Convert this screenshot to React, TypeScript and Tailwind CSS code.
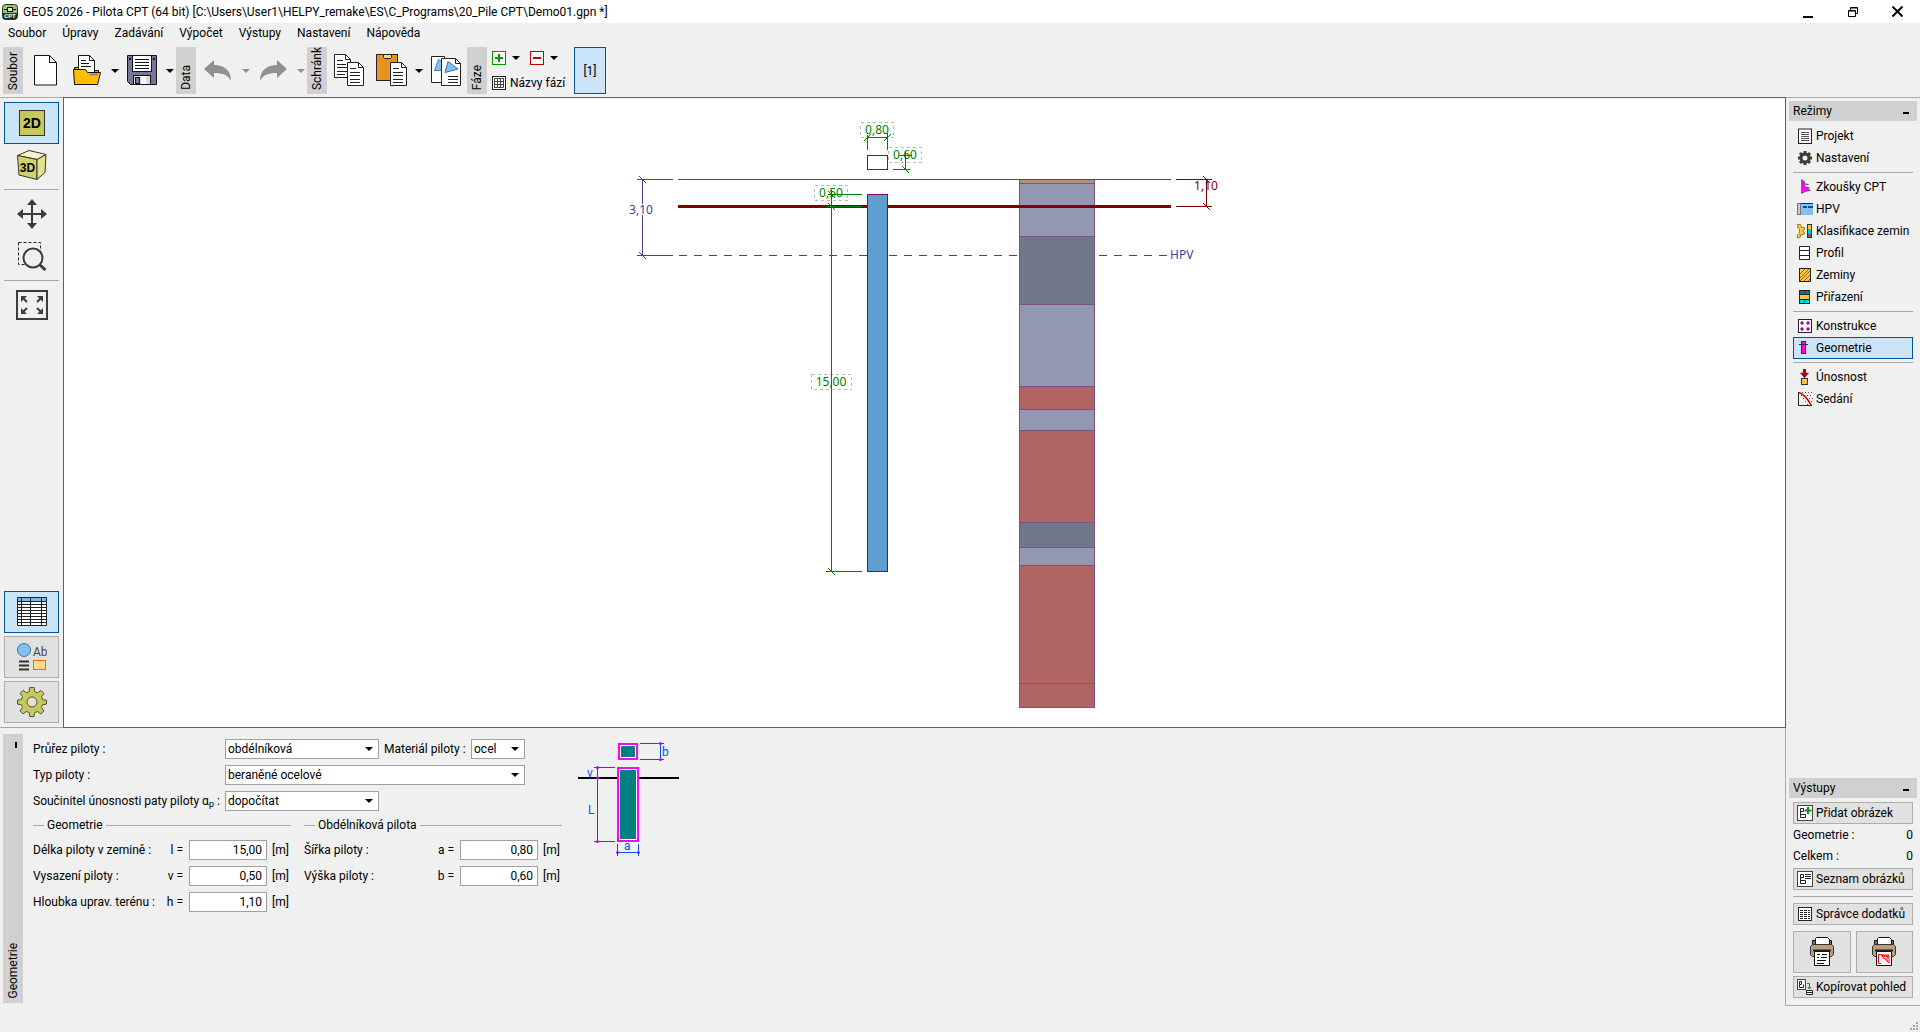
import React from 'react';

const Svg: React.FC<{ w: number; h: number; children: React.ReactNode; label?: string }> = ({ w, h, children, label }) => (
  <svg width={w} height={h} viewBox={`0 0 ${w} ${h}`} className="shrink-0" aria-hidden={label ? undefined : true} aria-label={label}>
    {children}
  </svg>
);

const Caret: React.FC<{ color?: string }> = ({ color = '#000' }) => (
  <Svg w={8} h={4}>
    <path d="M0 0h8L4 4z" fill={color} />
  </Svg>
);

const DropButton: React.FC<{ label: string; muted?: boolean }> = ({ label, muted }) => (
  <button aria-label={label} className="flex h-full w-[13px] items-center justify-center">
    <Caret color={muted ? '#909090' : '#000'} />
  </button>
);

const GroupStrip: React.FC<{ label: string }> = ({ label }) => (
  <div className="mr-px flex h-full w-5 shrink-0 items-end bg-[#d0d0d0] pb-1">
    <span className="rotate-180 leading-5 whitespace-nowrap [writing-mode:vertical-rl]">{label}</span>
  </div>
);

/* Toolbar icons */

const NewIcon = () => (
  <Svg w={23} h={31}>
    <path d="M.5.5h15l7 7v22.500H.5z" fill="#fff" stroke="#111" />
    <path d="M15.500.5v7h7" fill="none" stroke="#111" />
  </Svg>
);

const OpenIcon = () => (
  <Svg w={29} h={31}>
    <path d="M1.500 29.500v-17h4l2 3h18v3" fill="#e8a800" stroke="#111" />
    <path d="M5.500 20V.5h11l5 5V20z" fill="#fff" stroke="#111" />
    <path d="M16.500.5v5h5M8 5.500h5M8 8.500h8M8 11.500h10" fill="none" stroke="#111" />
    <path d="M1.500 29.500l-1-15h12l2 3h13l-3 12z" fill="#ffbf00" stroke="#111" />
    <path d="M17 19.500h8" stroke="#888" strokeWidth="2" />
  </Svg>
);

const SaveIcon = () => (
  <Svg w={30} h={31}>
    <path d="M.5.5h29v29h-26l-3-3z" fill="#76769a" stroke="#111" />
    <rect x="5.500" y=".5" width="19" height="16" fill="#fff" stroke="#111" />
    <path d="M8 4.500h14M8 7.500h14M8 10.500h14M8 13.500h14" stroke="#111" />
    <rect x="2" y="3" width="2" height="2" fill="#111" />
    <rect x="26" y="3" width="2" height="2" fill="#111" />
    <rect x="6.500" y="20.500" width="17" height="9" fill="#ddd" stroke="#111" />
    <rect x="8.500" y="22.500" width="4" height="6" fill="#76769a" stroke="#111" />
    <path d="M15.500 21v8M18 21v8" stroke="#fff" strokeWidth="2" />
  </Svg>
);

const UndoIcon = () => (
  <Svg w={28} h={22}>
    <path d="M0 9L10 0v5c10 0 17 5 17 16-3-6-8-8-17-8v5z" fill="#909090" />
  </Svg>
);

const RedoIcon = () => (
  <Svg w={28} h={22}>
    <path d="M28 9L18 0v5C8 5 1 10 1 21c3-6 8-8 17-8v5z" fill="#909090" />
  </Svg>
);

const CopyIcon = () => (
  <Svg w={31} h={33}>
    <path d="M.5.5h11l5 5v18H.5z" fill="#fff" stroke="#222" />
    <path d="M11.500.5v5h5M3 6.500h6M3 10.500h9M3 13.500h10M3 17.500h10M3 20.500h8" fill="none" stroke="#222" />
    <path d="M13.500 8.500h11l5 5v18h-16z" fill="#fff" stroke="#222" />
    <path d="M24.500 8.500v5h5M16 14.500h6M16 18.500h10M16 21.500h10M16 25.500h10M16 28.500h10" fill="none" stroke="#222" />
  </Svg>
);

const PasteIcon = () => (
  <Svg w={31} h={33}>
    <rect x=".5" y=".5" width="21" height="26" fill="#e59420" stroke="#222" />
    <path d="M7.500.5h8v3l-1 1h-6l-1-1z" fill="#ffd98a" stroke="#222" />
    <path d="M14.500 8.500h11l5 5v18h-16z" fill="#fff" stroke="#222" />
    <path d="M25.500 8.500v5h5M17 14.500h6M17 18.500h10M17 21.500h10M17 25.500h10M17 28.500h10" fill="none" stroke="#222" />
  </Svg>
);

const PicturesIcon = () => (
  <Svg w={31} h={32}>
    <path d="M.5 1.500h13v26H.5z" fill="#fff" stroke="#222" />
    <path d="M3.500 15.500l4-11 3 2v9z" fill="#84c0ee" stroke="#3b82c4" />
    <path d="M10.500 3.500h14l5 5v22h-19z" fill="#fff" stroke="#222" />
    <path d="M24.500 3.500v5h5" fill="none" stroke="#222" />
    <path d="M14 17.500l3-11 10 7.500z" fill="#84c0ee" stroke="#2f74b5" />
    <path d="M17 21.500h10M17 24.500h10M17 27.500h10" stroke="#222" />
  </Svg>
);

const PlusIcon = () => (
  <Svg w={14} h={14}>
    <rect x=".5" y=".5" width="13" height="13" fill="#fff" stroke="#009a00" />
    <path d="M7 3v8M3 7h8" stroke="#009a00" strokeWidth="2" />
  </Svg>
);

const MinusIcon = () => (
  <Svg w={14} h={14}>
    <rect x=".5" y=".5" width="13" height="13" fill="#fff" stroke="#c00000" />
    <path d="M3 7h8" stroke="#c00000" strokeWidth="2" />
  </Svg>
);

const StageNamesIcon = () => (
  <Svg w={14} h={14}>
    <rect x=".5" y=".5" width="13" height="13" fill="#fff" stroke="#222" />
    <path d="M2.500 2.500h9v9h-9zM2.500 5.500h9M2.500 8.500h9M5.500 2.500v9M8.500 2.500v9" fill="none" stroke="#444" />
  </Svg>
);

const AppIcon = () => (
  <Svg w={16} h={16}>
    <rect x=".5" y=".5" width="15" height="15" rx="3" fill="#9cbf7c" stroke="#26361c" />
    <path d="M2 5.500h3M11 5.500h3" stroke="#111" />
    <rect x="5.500" y="3.500" width="5" height="4" fill="#d8ecc6" stroke="#111" />
    <path d="M1 9h14v4.500a2 2 0 0 1-2 2H3a2 2 0 0 1-2-2z" fill="#22331a" />
    <text x="8" y="14" textAnchor="middle" fontSize="6" fontWeight="700" fill="#fff">CPT</text>
  </Svg>
);

/* View buttons on the left */

const View2DIcon = () => (
  <Svg w={26} h={26}>
    <rect x=".5" y=".5" width="25" height="25" fill="#c8c85c" stroke="#333" />
    <text x="13" y="18" textAnchor="middle" fontSize="14" fontWeight="700" fontFamily="Liberation Sans, sans-serif">2D</text>
  </Svg>
);

const View3DIcon = () => (
  <Svg w={30} h={30}>
    <path d="M.5 5.500L12 .5l17 4-9 5z" fill="#f6f6c8" stroke="#333" />
    <path d="M.5 5.500l19.500 4v20L2 25z" fill="#d2d268" stroke="#333" />
    <path d="M20 9.500l9-5-1 18-8 7z" fill="#e2e28c" stroke="#333" />
    <text x="10.500" y="22" textAnchor="middle" fontSize="12" fontWeight="700" fontFamily="Liberation Sans, sans-serif">3D</text>
  </Svg>
);

const MoveIcon = () => (
  <Svg w={30} h={30}>
    <path d="M15 4v22M4 15h22" stroke="#3c3c3c" strokeWidth="2" />
    <path d="M15 0l5 6H10zM15 30l5-6H10zM0 15l6-5v10zM30 15l-6-5v10z" fill="#3c3c3c" />
  </Svg>
);

const ZoomIcon = () => (
  <Svg w={30} h={30}>
    <rect x="1.500" y="1.500" width="22" height="22" fill="none" stroke="#222" strokeDasharray="3 2" />
    <circle cx="16" cy="17" r="9.500" fill="#efefef" stroke="#3c3c3c" strokeWidth="2" />
    <path d="M22.500 23.500l6 5.500" stroke="#3c3c3c" strokeWidth="3" />
  </Svg>
);

const FitIcon = () => (
  <Svg w={32} h={30}>
    <rect x="1" y="1" width="30" height="28" fill="none" stroke="#3c3c3c" strokeWidth="2" />
    <path d="M6 7l5 5M26 7l-5 5M6 23l5-5M26 23l-5-5" stroke="#3c3c3c" strokeWidth="2" />
    <path d="M5 6h6l-6 6zM27 6h-6l6 6zM5 24h6l-6-6zM27 24h-6l6-6z" fill="#3c3c3c" />
  </Svg>
);

const TableIcon = () => (
  <Svg w={30} h={30}>
    <rect x="1" y="1" width="28" height="28" fill="#fff" />
    <rect x="1" y="1" width="28" height="4" fill="#7db8e8" />
    <path d="M.5.5h29v28H.5zM0 4.500h30M0 7.500h30M0 10.500h30M0 13.500h30M0 16.500h30M0 19.500h30M0 22.500h30M0 25.500h30M4.500 0v29M13.500 0v29M24.500 0v29" fill="none" stroke="#222" />
  </Svg>
);

const StyleIcon = () => (
  <Svg w={30} h={28}>
    <circle cx="7" cy="7" r="6.500" fill="#84c0ee" stroke="#2f74b5" />
    <text x="16" y="13" fontSize="12" fill="#444">Ab</text>
    <path d="M2 18.500h10M2 22.500h10M2 26.500h10" stroke="#333" strokeWidth="2" />
    <rect x="16.500" y="17.500" width="12" height="9" fill="#ffdb92" stroke="#e07000" />
  </Svg>
);

const GearIcon = () => (
  <Svg w={30} h={30}>
    <path
      d="M12.800.5h4.400l.6 4.200 2.900 1.200 3.300-2.500 3 3-2.500 3.400 1.200 2.900 3.800.5v3.800l-3.900.7-1.200 2.800 2.500 3.500-3 3-3.400-2.500-2.900 1.200-.6 3.800h-4.200l-.6-3.900-2.800-1.200L6 26.900l-3-3 2.400-3.300-1.100-2.900-3.800-.6v-4l3.900-.6 1.100-2.900L3.100 6.300l3-3 3.200 2.500 2.900-1.200z"
      fill="#c8c85c"
      stroke="#555530"
    />
    <circle cx="15" cy="15" r="5" fill="#e1e1e1" stroke="#555530" />
  </Svg>
);

/* Mode icons, all in a 16 px box */

const modeIcons: Record<string, React.ReactNode> = {
  Projekt: (
    <>
      <rect x="1.500" y="1" width="13" height="14.500" fill="#fff" stroke="#222" />
      <path d="M4 4.500h8M4 6.500h8M4 8.500h8M4 10.500h8M4 12.500h8" stroke="#555" />
    </>
  ),
  Nastavení: (
    <>
      <circle cx="8" cy="8" r="4" fill="none" stroke="#3c3c3c" strokeWidth="3" />
      <path d="M8 1v3M8 12v3M1 8h3M12 8h3M3 3l2 2M11 11l2 2M13 3l-2 2M3 13l2-2" stroke="#3c3c3c" strokeWidth="3" />
    </>
  ),
  'Zkoušky CPT': <path d="M4.500.5l3 2v2l4 1h-4v2l5 1.500h-3l4 2.500-5 1-4 2z" fill="#f0f" stroke="#555" strokeWidth=".7" />,
  HPV: (
    <>
      <rect x="4" y="3" width="12" height="11" fill="#84c0ee" />
      <path d="M4 2.500h12" stroke="#800000" />
      <path d="M6 6h4M11 6h5" stroke="#0050b0" strokeWidth="2" />
      <rect x=".5" y="2.500" width="3" height="11" fill="#ccc" stroke="#777" />
    </>
  ),
  'Klasifikace zemin': (
    <>
      <path d="M.5 1.500h3l1 3h3v2l-2 1.500 2 1.500v1.500l-4 1v2l-3 1V12l2-2V6l-2-1.500z" fill="#ffc83c" stroke="#8a6400" strokeWidth=".8" />
      <rect x="10.500" y="1.500" width="4" height="13" fill="#00c8c8" stroke="#333" />
      <rect x="11" y="2" width="3" height="4" fill="#ffc83c" />
      <rect x="11" y="11" width="3" height="3" fill="#666" />
    </>
  ),
  Profil: <path d="M2.500 1.500h10v13h-10zM2.500 5.500h10M2.500 10.500h10" fill="#fff" stroke="#222" />,
  Zeminy: (
    <>
      <rect x="2.500" y="1.500" width="11" height="13" fill="#ffc83c" stroke="#222" />
      <path d="M3 7l5-5M3 11l9-9M3 14L13 4M7 14l6-6M11 14l2-2" stroke="#9a5c00" />
    </>
  ),
  Přiřazení: (
    <>
      <rect x="2.500" y="1.500" width="10" height="13" fill="#ffc83c" stroke="#222" />
      <rect x="3" y="2" width="9" height="3" fill="#008080" />
      <rect x="3" y="11" width="9" height="3" fill="#00e0e0" />
      <path d="M2 5.500h11M2 10.500h11M6 14l3-3M6 5l3-3" stroke="#222" />
    </>
  ),
  Konstrukce: (
    <>
      <rect x="1.500" y="1.500" width="13" height="13" fill="#fff" stroke="#222" />
      <g fill="#a000a0">
        <circle cx="5" cy="5" r="1.700" />
        <circle cx="11" cy="5" r="1.700" />
        <circle cx="5" cy="11" r="1.700" />
        <circle cx="11" cy="11" r="1.700" />
      </g>
    </>
  ),
  Geometrie: (
    <>
      <rect x="4.500" y="1.500" width="4" height="12" fill="#f0f" stroke="#333" />
      <path d="M2 4.500h9" stroke="#333" />
    </>
  ),
  Únosnost: (
    <>
      <path d="M7.500 0v5" stroke="#c00000" strokeWidth="3" />
      <path d="M3.500 4h8l-4 5z" fill="#c00000" stroke="#333" strokeWidth=".5" />
      <rect x="4.500" y="9.500" width="6" height="6" fill="#ffc83c" stroke="#333" />
    </>
  ),
  Sedání: (
    <>
      <path d="M2 1.500h14M4 4.500h12M6 7.500h10M8 10.500h8M10 13.500h6" stroke="#555" strokeDasharray="1 2" />
      <path d="M1.500 1v13.500H15" fill="none" stroke="#222" />
      <path d="M2 1.500c6 2 9 7 12 12.500" fill="none" stroke="#d00000" strokeWidth="1.500" />
    </>
  ),
};

const PanelHeader: React.FC<{ title: string }> = ({ title }) => (
  <div className="mx-[3px] flex h-5 items-center justify-between bg-[#d0d0d0] px-1">
    <h2>{title}</h2>
    <button aria-label={`Sbalit ${title}`} className="flex h-5 w-3.5 items-center justify-center pt-1">
      <span className="h-0.5 w-1.5 bg-black" />
    </button>
  </div>
);

const Divider = () => <hr className="my-[3px] border-t border-[#a8a8a8]" />;

const ModeItem: React.FC<{ name: string; active?: boolean }> = ({ name, active }) => (
  <button
    className={`flex h-[22px] w-full items-center gap-[3px] border pl-[3px] text-left whitespace-nowrap ${
      active ? 'border-[#005499] bg-[#cce4f7]' : 'border-transparent'
    }`}
  >
    <Svg w={16} h={16}>{modeIcons[name]}</Svg>
    {name}
  </button>
);

const modeGroups = [
  ['Projekt', 'Nastavení'],
  ['Zkoušky CPT', 'HPV', 'Klasifikace zemin', 'Profil', 'Zeminy', 'Přiřazení'],
  ['Konstrukce', 'Geometrie'],
  ['Únosnost', 'Sedání'],
];

const PictureGlyph = () => (
  <>
    <rect x=".5" y=".5" width="15" height="15" fill="#fff" stroke="#444" />
    <path d="M3.500 3.500h3v3h-3zM3.500 6.500v6h5v-3h-5" fill="none" stroke="#222" />
  </>
);

const OutputButton: React.FC<{ label: string; children: React.ReactNode }> = ({ label, children }) => (
  <button className="flex h-[22px] w-full items-center gap-[3px] border border-[#adadad] bg-[#e1e1e1] pl-[3px] whitespace-nowrap">
    <Svg w={16} h={16}>{children}</Svg>
    {label}
  </button>
);

const PrinterIcon: React.FC<{ picture?: boolean }> = ({ picture }) => (
  <Svg w={24} h={30}>
    <path d="M2.500 8V3.500h3V8M19 8V3.500h2.500V8" fill="#777" stroke="#111" />
    <path d="M5.500 9V1.500l1-1h11l2 2V9z" fill="#fff" stroke="#111" />
    <path d="M.5 9.500l2-2h19l2 2v8l-2 2h-19l-2-2z" fill="#b8a078" stroke="#333" />
    <path d="M3 13.500h18" stroke="#222" strokeWidth="2" />
    <path d="M4.500 14.500h15v14h-15z" fill="#fff" stroke="#111" />
    {picture ? (
      <path d="M9 17.500H6.500v9H9M9 18h8v8zM9 18l8 2M12 18v4M15 18v6" fill="none" stroke="#f00" />
    ) : (
      <path d="M7 17.500h3M12 17.500h5M7 20.500h2M11 20.500h6M7 23.500h9M7 26.500h7" stroke="#111" />
    )}
  </Svg>
);

/* Soil column: top and bottom of each layer in drawing units */
const layers = [
  { top: 179, bottom: 183, fill: '#b09080' },
  { top: 183, bottom: 236, fill: '#9198b0' },
  { top: 236, bottom: 304, fill: '#707788' },
  { top: 304, bottom: 386, fill: '#9198b0' },
  { top: 386, bottom: 409, fill: '#b06563' },
  { top: 409, bottom: 430, fill: '#9198b0' },
  { top: 430, bottom: 522, fill: '#b06563' },
  { top: 522, bottom: 547, fill: '#707788' },
  { top: 547, bottom: 565, fill: '#9198b0' },
  { top: 565, bottom: 683, fill: '#b06563' },
  { top: 683, bottom: 707, fill: '#b06563' },
];

const Tick: React.FC<{ x: number; y: number; flip?: boolean }> = ({ x, y, flip }) => (
  <path d={flip ? `M${x - 3} ${y + 3}l7-7` : `M${x - 3} ${y - 3}l7 7`} />
);

const Drawing = () => (
  <svg
    viewBox="64 98 1721 629"
    className="block h-full w-full"
    preserveAspectRatio="xMidYMid meet"
    role="img"
    aria-label="Geometrie piloty"
    fontSize="12"
    fontFamily="Noto Sans, sans-serif"
    textAnchor="middle"
  >
    <g fill="none" shapeRendering="crispEdges">
      <path d="M679 255.500H1171" stroke="#4040a0" strokeDasharray="8 7" />
      {layers.map(({ top, bottom, fill }) => (
        <rect key={top} x="1019.500" y={top + 0.5} width="75" height={bottom - top} fill={fill} stroke="#80508a" />
      ))}
      <path d="M678 179.500H1171" stroke="#008000" />
      <path d="M678 206.500H1171" stroke="#800000" strokeWidth="3" />
      <rect x="867.500" y="194.500" width="20" height="377" fill="#5f9fcf" stroke="#800080" />
      <rect x="867.500" y="155.500" width="20" height="14" stroke="#800080" />
      <g stroke="#b8b8b8" strokeDasharray="3 3">
        <rect x="860.500" y="122.500" width="33" height="15" />
        <rect x="888.500" y="147.500" width="33" height="15" />
        <rect x="814.500" y="185.500" width="33" height="15" />
        <rect x="811.500" y="374.500" width="40" height="15" />
      </g>
      <g stroke="#008000">
        <path d="M867.500 135V150M887.500 133V150M867 137.500H888" />
        <path d="M905.500 151V170M893 169.500H910M899 155.500H912" />
        <path d="M831.500 190V572M828 194.500H862M826 206.500H862M826 571.500H862" />
      </g>
      <g stroke="#4040a0">
        <path d="M642.500 179V256M637 179.500H673M637 255.500H673" />
      </g>
      <path d="M1206.500 179V207M1176 179.500H1212M1176 206.500H1212" stroke="#800000" />
    </g>
    <g fill="none">
      <g stroke="#008000">
        <Tick x={867} y={138} flip />
        <Tick x={887} y={138} flip />
        <Tick x={905} y={169} />
        <Tick x={831} y={206} />
        <Tick x={831} y={571} />
        <Tick x={831} y={194} />
      </g>
      <g stroke="#4040a0">
        <Tick x={642} y={179} />
        <Tick x={642} y={255} />
      </g>
      <g stroke="#800000">
        <Tick x={1206} y={179} />
        <Tick x={1206} y={206} />
      </g>
    </g>
    <g fill="#008000">
      <text x="877" y="134">0,80</text>
      <text x="905" y="159">0,60</text>
      <text x="831" y="197">0,50</text>
      <text x="831" y="386">15,00</text>
    </g>
    <text x="641" y="214" fill="#4040a0" stroke="#fff" strokeWidth="2" paintOrder="stroke">3,10</text>
    <text x="1206" y="190" fill="#800000">1,10</text>
    <text x="1170" y="259" fill="#4040a0" textAnchor="start">HPV</text>
  </svg>
);

/* Small key to the dimensions typed in the form */
const PileSketch = () => (
  <svg width="104" height="116" viewBox="577 742 104 116" className="shrink-0" role="img" aria-label="Schéma piloty" fontSize="12" fill="#0050ff">
    <path d="M578 778H679" stroke="#000" strokeWidth="2" />
    <rect x="619" y="744" width="18" height="15" fill="#fff" stroke="#f0f" strokeWidth="2" />
    <rect x="621" y="746" width="14" height="11" fill="#008080" />
    <rect x="618" y="768" width="20" height="73" fill="#fff" stroke="#f0f" strokeWidth="2" />
    <rect x="620" y="770" width="16" height="69" fill="#008080" />
    <path d="M640 743.500H664M640 759.500H664M660.500 743V760M594 767.500H615M594 841.500H615M597.500 767V842M617.500 844V856M638.500 844V856M617 852.500H639" fill="none" stroke="#0050ff" />
    <g fill="#c000ff">
      <circle cx="660.500" cy="743.500" r="1.500" />
      <circle cx="660.500" cy="759.500" r="1.500" />
      <circle cx="597.500" cy="767.500" r="1.500" />
      <circle cx="597.500" cy="778" r="1.500" />
      <circle cx="597.500" cy="841.500" r="1.500" />
      <circle cx="617.500" cy="852.500" r="1.500" />
      <circle cx="638.500" cy="852.500" r="1.500" />
    </g>
    <text x="662" y="756">b</text>
    <text x="587" y="777">v</text>
    <text x="588" y="814">L</text>
    <text x="624" y="850">a</text>
  </svg>
);

const Select: React.FC<{ id: string; value: string; className: string }> = ({ id, value, className }) => (
  <div className={`relative shrink-0 ${className}`}>
    <select id={id} className="h-5 w-full appearance-none border border-[#a0a0a0] bg-white pl-0.5 leading-4 outline-none">
      <option>{value}</option>
    </select>
    <span className="pointer-events-none absolute inset-y-0 right-1.5 flex items-center">
      <Caret />
    </span>
  </div>
);

interface FieldProps {
  id: string;
  label: string;
  symbol: string;
  value: string;
}

const Field: React.FC<FieldProps> = ({ id, label, symbol, value }) => (
  <div className="flex h-5 items-center whitespace-nowrap">
    <label htmlFor={id} className="flex flex-1 justify-between pr-1.5">
      <span>{label}</span>
      <span>{symbol} =</span>
    </label>
    <input id={id} defaultValue={value} className="h-5 w-[78px] border border-[#a0a0a0] bg-white px-1 text-right outline-none" />
    <span className="w-6 pl-[5px]">[m]</span>
  </div>
);

const FieldGroup: React.FC<{ title: string; children: React.ReactNode }> = ({ title, children }) => (
  <fieldset className="flex w-[258px] flex-col gap-1.5">
    <legend className="mb-[5px] flex h-5 w-full items-center gap-[3px]">
      <span className="h-px w-[11px] bg-[#a8a8a8]" />
      {title}
      <span className="h-px flex-1 bg-[#a8a8a8]" />
    </legend>
    {children}
  </fieldset>
);

const ViewButton: React.FC<{ label: string; look?: 'flat' | 'active' | 'raised'; children: React.ReactNode }> = ({ label, look = 'flat', children }) => {
  const looks = {
    flat: 'border-transparent',
    active: 'border-[#005499] bg-[#cce4f7]',
    raised: 'border-[#adadad] bg-[#e1e1e1]',
  };
  return (
    <button aria-label={label} className={`flex h-[42px] w-full items-center justify-center border ${looks[look]}`}>
      {children}
    </button>
  );
};

const menu = ['Soubor', 'Úpravy', 'Zadávání', 'Výpočet', 'Výstupy', 'Nastavení', 'Nápověda'];

const ToolButton: React.FC<{ label: string; children: React.ReactNode }> = ({ label, children }) => (
  <button aria-label={label} className="flex h-full w-[42px] items-center justify-center">
    {children}
  </button>
);

const App: React.FC = () => (
  <div className="flex min-h-screen flex-col bg-[#f0f0f0] font-['Roboto','Noto_Sans',sans-serif] text-[12px] leading-4 text-black">
    <header className="flex h-[23px] items-center bg-white pl-0.5">
      <AppIcon />
      <h1 className="flex-1 pl-[5px]">GEO5 2026 - Pilota CPT (64 bit) [C:\Users\User1\HELPY_remake\ES\C_Programs\20_Pile CPT\Demo01.gpn *]</h1>
      <div className="flex h-full">
        <button aria-label="Minimalizovat" className="flex h-full w-[45px] items-center justify-center pt-1">
          <Svg w={10} h={10}><path d="M0 8h10" stroke="#000" strokeWidth="2" /></Svg>
        </button>
        <button aria-label="Obnovit" className="flex h-full w-[45px] items-center justify-center">
          <Svg w={10} h={10}><path d="M.5 3.500h7v6h-7zM.5 4h7M2.500 3V.5h7v6H8M2.500 1h7" fill="none" stroke="#000" /></Svg>
        </button>
        <button aria-label="Zavřít" className="flex h-full w-[45px] items-center justify-center">
          <Svg w={11} h={11}><path d="M.5.5l10 10M10.500.5l-10 10" stroke="#000" strokeWidth="2" /></Svg>
        </button>
      </div>
    </header>

    <nav className="flex h-6 items-start">
      {menu.map((item) => (
        <button key={item} className="h-5 px-2">{item}</button>
      ))}
    </nav>

    <div className="flex h-[47px] items-center pl-[3px]">
      <GroupStrip label="Soubor" />
      <ToolButton label="Nový"><NewIcon /></ToolButton>
      <ToolButton label="Otevřít"><OpenIcon /></ToolButton>
      <DropButton label="Naposledy otevřené" />
      <ToolButton label="Uložit"><SaveIcon /></ToolButton>
      <DropButton label="Uložit jako" />
      <GroupStrip label="Data" />
      <ToolButton label="Zpět"><UndoIcon /></ToolButton>
      <DropButton label="Historie zpět" muted />
      <ToolButton label="Znovu"><RedoIcon /></ToolButton>
      <DropButton label="Historie znovu" muted />
      <GroupStrip label="Schránk" />
      <ToolButton label="Kopírovat"><CopyIcon /></ToolButton>
      <ToolButton label="Vložit"><PasteIcon /></ToolButton>
      <DropButton label="Možnosti vložení" />
      <ToolButton label="Kopírovat obrázky"><PicturesIcon /></ToolButton>
      <GroupStrip label="Fáze" />
      <div className="flex h-full w-[86px] flex-col justify-between py-[3px] pl-1">
        <div className="flex h-4 items-center">
          <button aria-label="Přidat fázi"><PlusIcon /></button>
          <span className="h-4 w-6 pl-[3px]"><DropButton label="Možnosti přidání" /></span>
          <button aria-label="Odebrat fázi"><MinusIcon /></button>
          <span className="h-4 w-6 pl-[3px]"><DropButton label="Možnosti odebrání" /></span>
        </div>
        <button className="flex h-4 items-center gap-1 whitespace-nowrap">
          <StageNamesIcon />
          Názvy fází
        </button>
      </div>
      <button className="h-full w-8 border border-[#005499] bg-[#cce4f7]">[1]</button>
    </div>

    <main className="mt-[3px] flex flex-1">
      <div className="flex min-w-0 flex-1 flex-col">
        <div className="flex flex-1">
          <aside className="flex w-[63px] shrink-0 flex-col justify-between border-y border-[#a8a8a8] px-1 py-1">
            <div>
              <ViewButton label="Pohled 2D" look="active"><View2DIcon /></ViewButton>
              <ViewButton label="Pohled 3D"><View3DIcon /></ViewButton>
              <Divider />
              <ViewButton label="Posun"><MoveIcon /></ViewButton>
              <ViewButton label="Zvětšit výřez"><ZoomIcon /></ViewButton>
              <Divider />
              <ViewButton label="Zobrazit vše"><FitIcon /></ViewButton>
            </div>
            <div className="flex flex-col gap-[3px]">
              <ViewButton label="Tabulky" look="active"><TableIcon /></ViewButton>
              <ViewButton label="Styl kreslení" look="raised"><StyleIcon /></ViewButton>
              <ViewButton label="Nastavení" look="raised"><GearIcon /></ViewButton>
            </div>
          </aside>
          <section className="flex-1 border border-[#0078d4] bg-white">
            <Drawing />
          </section>
        </div>

        <section className="flex h-[278px] border-r border-[#a8a8a8] pt-[6px] pb-[3px] pl-[3px]">
          <div className="flex w-5 shrink-0 flex-col items-center justify-between bg-[#d0d0d0] pt-2 pb-1">
            <button aria-label="Sbalit panel" className="flex h-1.5 w-full justify-end pr-1.5">
              <span className="h-1.5 w-0.5 bg-black" />
            </button>
            <h2 className="rotate-180 leading-5 [writing-mode:vertical-rl]">Geometrie</h2>
          </div>
          <form className="flex flex-col gap-1.5 pt-[5px] pl-2.5 whitespace-nowrap">
            <div className="flex h-5 items-center">
              <label htmlFor="section" className="w-48">Průřez piloty :</label>
              <Select id="section" value="obdélníková" className="w-[154px]" />
              <label htmlFor="material" className="w-[92px] pl-[5px]">Materiál piloty :</label>
              <Select id="material" value="ocel" className="w-[54px]" />
            </div>
            <div className="flex h-5 items-center">
              <label htmlFor="type" className="w-48">Typ piloty :</label>
              <Select id="type" value="beraněné ocelové" className="w-[300px]" />
            </div>
            <div className="flex h-5 items-center">
              <label htmlFor="alpha" className="w-48">
                Součinitel únosnosti paty piloty α<sub>p</sub> :
              </label>
              <Select id="alpha" value="dopočítat" className="w-[154px]" />
            </div>
            <div className="-mt-1.5 flex gap-[13px] pt-1">
              <FieldGroup title="Geometrie">
                <Field id="l" label="Délka piloty v zemině :" symbol="l" value="15,00" />
                <Field id="v" label="Vysazení piloty :" symbol="v" value="0,50" />
                <Field id="h" label="Hloubka uprav. terénu :" symbol="h" value="1,10" />
              </FieldGroup>
              <FieldGroup title="Obdélníková pilota">
                <Field id="a" label="Šířka piloty :" symbol="a" value="0,80" />
                <Field id="b" label="Výška piloty :" symbol="b" value="0,60" />
              </FieldGroup>
            </div>
          </form>
          <div className="pt-2 pl-[15px]">
            <PileSketch />
          </div>
        </section>
      </div>

      <aside className="flex w-[134px] shrink-0 flex-col justify-between border-y border-[#a8a8a8] pt-[3px] pb-[7px]">
        <section>
          <PanelHeader title="Režimy" />
          <div className="px-[7px] pt-1">
            {modeGroups.map((group, i) => (
              <React.Fragment key={group[0]}>
                {i > 0 && <Divider />}
                {group.map((name) => (
                  <ModeItem key={name} name={name} active={name === 'Geometrie'} />
                ))}
              </React.Fragment>
            ))}
          </div>
        </section>
        <section>
          <PanelHeader title="Výstupy" />
          <div className="px-[7px] pt-1">
            <OutputButton label="Přidat obrázek">
              <PictureGlyph />
              <path d="M11 2v7M7.500 5.500h7" stroke="#009a00" strokeWidth="2" />
            </OutputButton>
            <dl className="py-px leading-[21px]">
              <div className="flex justify-between"><dt>Geometrie :</dt><dd>0</dd></div>
              <div className="flex justify-between"><dt>Celkem :</dt><dd>0</dd></div>
            </dl>
            <OutputButton label="Seznam obrázků">
              <PictureGlyph />
              <path d="M8 3.500h6M8 5.500h6M8 7.500h6" stroke="#222" />
            </OutputButton>
            <hr className="my-1.5 border-t border-[#a8a8a8]" />
            <OutputButton label="Správce dodatků">
              <rect x="1.500" y="1.500" width="13" height="13" fill="#fff" stroke="#222" />
              <path d="M3 4.500h10M3 6.500h10M3 8.500h10M3 10.500h10M3 12.500h10" stroke="#222" strokeDasharray="3 1" />
            </OutputButton>
            <div className="flex gap-[5px] pt-1.5 pb-[3px]">
              <button aria-label="Tisk dokumentu" className="flex h-[42px] flex-1 items-center justify-center border border-[#adadad] bg-[#e1e1e1]"><PrinterIcon /></button>
              <button aria-label="Tisk obrázku" className="flex h-[42px] flex-1 items-center justify-center border border-[#adadad] bg-[#e1e1e1]"><PrinterIcon picture /></button>
            </div>
            <OutputButton label="Kopírovat pohled">
              <rect x=".5" y=".5" width="8" height="10" fill="#fff" stroke="#444" />
              <path d="M2.500 2.500h2v3h-2zM2.500 5.500v3h4v-3" fill="none" stroke="#222" />
              <path d="M10 4.500h2.500V9M11 8l1.500 2L14 8" fill="none" stroke="#009a00" />
              <path d="M9.500 11.500h6v4h-6zM9 13.500h7" fill="#fff" stroke="#222" />
            </OutputButton>
          </div>
        </section>
      </aside>
    </main>

    <footer className="flex h-[26px] items-end justify-end p-0.5">
      <Svg w={8} h={8}>
        <path d="M6 0h2v2H6zM3 3h2v2H3zM6 3h2v2H6zM0 6h2v2H0zM3 6h2v2H3zM6 6h2v2H6z" fill="#a8a8a8" />
      </Svg>
    </footer>
  </div>
);

export default App;
